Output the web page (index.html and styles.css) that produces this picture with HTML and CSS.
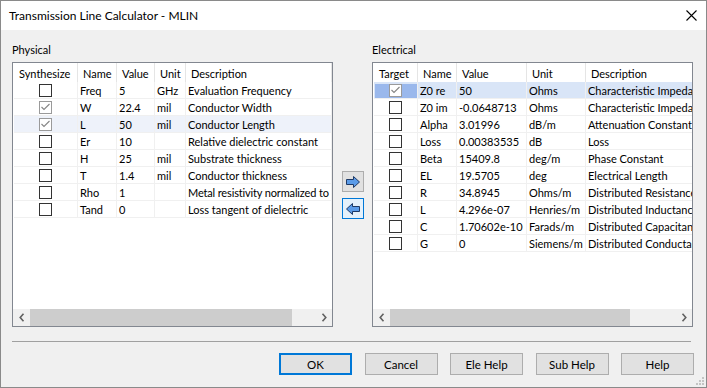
FILE: index.html
```html
<!DOCTYPE html>
<html lang="en">
<head>
    <meta charset="UTF-8">
    <meta name="viewport" content="width=device-width, initial-scale=1.0">
    <title>Transmission Line Calculator - MLIN</title>
    <link rel="stylesheet" href="styles.css">
</head>
<body>
    <div class="window">
        <div class="titlebar">
            <span class="title">Transmission Line Calculator - MLIN</span>
            <svg class="close" width="11" height="11" viewBox="0 0 11 11">
                <path d="M0.5 0.5 L10.5 10.5 M10.5 0.5 L0.5 10.5" stroke="#000" stroke-width="1.1" fill="none"/>
            </svg>
        </div>

        <div class="content">
            <div class="panels">
                <div class="panel-label">Physical</div>
                <div></div>
                <div class="panel-label">Electrical</div>

                <!-- physical parameters -->
                <div class="list physical">
                    <div class="rows">
                        <div class="row head">
                            <div class="cell">Synthesize</div>
                            <div class="cell">Name</div>
                            <div class="cell">Value</div>
                            <div class="cell">Unit</div>
                            <div class="cell">Description</div>
                        </div>
                        <div class="row">
                            <div class="cell check"><span class="box"></span></div>
                            <div class="cell">Freq</div>
                            <div class="cell">5</div>
                            <div class="cell">GHz</div>
                            <div class="cell">Evaluation Frequency</div>
                        </div>
                        <div class="row">
                            <div class="cell check"><span class="box checked"><svg width="11" height="11" viewBox="0 0 11 11"><path d="M1.5 5 L4 7.5 L9.5 2" stroke="#858585" stroke-width="1.1" fill="none"/></svg></span></div>
                            <div class="cell">W</div>
                            <div class="cell">22.4</div>
                            <div class="cell">mil</div>
                            <div class="cell">Conductor Width</div>
                        </div>
                        <div class="row sel">
                            <div class="cell check"><span class="box checked"><svg width="11" height="11" viewBox="0 0 11 11"><path d="M1.5 5 L4 7.5 L9.5 2" stroke="#858585" stroke-width="1.1" fill="none"/></svg></span></div>
                            <div class="cell">L</div>
                            <div class="cell">50</div>
                            <div class="cell">mil</div>
                            <div class="cell">Conductor Length</div>
                        </div>
                        <div class="row">
                            <div class="cell check"><span class="box"></span></div>
                            <div class="cell">Er</div>
                            <div class="cell">10</div>
                            <div class="cell"></div>
                            <div class="cell">Relative dielectric constant</div>
                        </div>
                        <div class="row">
                            <div class="cell check"><span class="box"></span></div>
                            <div class="cell">H</div>
                            <div class="cell">25</div>
                            <div class="cell">mil</div>
                            <div class="cell">Substrate thickness</div>
                        </div>
                        <div class="row">
                            <div class="cell check"><span class="box"></span></div>
                            <div class="cell">T</div>
                            <div class="cell">1.4</div>
                            <div class="cell">mil</div>
                            <div class="cell">Conductor thickness</div>
                        </div>
                        <div class="row">
                            <div class="cell check"><span class="box"></span></div>
                            <div class="cell">Rho</div>
                            <div class="cell">1</div>
                            <div class="cell"></div>
                            <div class="cell tight">Metal resistivity normalized to</div>
                        </div>
                        <div class="row">
                            <div class="cell check"><span class="box"></span></div>
                            <div class="cell">Tand</div>
                            <div class="cell">0</div>
                            <div class="cell"></div>
                            <div class="cell">Loss tangent of dielectric</div>
                        </div>
                    </div>
                    <div class="hscroll">
                        <div class="arrow"><svg width="6" height="9" viewBox="0 0 6 9"><path d="M4.5 0.8 L1.2 4.5 L4.5 8.2" stroke="#606060" stroke-width="1.6" fill="none"/></svg></div>
                        <div class="track"><div class="thumb thumb-physical"></div></div>
                        <div class="arrow"><svg width="6" height="9" viewBox="0 0 6 9"><path d="M1.5 0.8 L4.8 4.5 L1.5 8.2" stroke="#606060" stroke-width="1.6" fill="none"/></svg></div>
                    </div>
                </div>

                <!-- move buttons -->
                <div class="transfer">
                    <button class="move">
                        <svg width="16" height="12" viewBox="0 0 16 12"><path d="M1.5 3.5 H8.5 V0.5 L14.5 6 L8.5 11.5 V8.5 H1.5 Z" fill="#5b9be8" stroke="#1f3a66" stroke-width="1"/></svg>
                    </button>
                    <button class="move focus">
                        <svg width="16" height="12" viewBox="0 0 16 12"><path d="M14.5 3.5 H7.5 V0.5 L1.5 6 L7.5 11.5 V8.5 H14.5 Z" fill="#5b9be8" stroke="#1f3a66" stroke-width="1"/></svg>
                    </button>
                </div>

                <!-- electrical results -->
                <div class="list electrical">
                    <div class="rows">
                        <div class="row head">
                            <div class="cell">Target</div>
                            <div class="cell">Name</div>
                            <div class="cell">Value</div>
                            <div class="cell">Unit</div>
                            <div class="cell">Description</div>
                        </div>
                        <div class="row sel-active">
                            <div class="cell check hot"><span class="box checked"><svg width="11" height="11" viewBox="0 0 11 11"><path d="M1.5 5 L4 7.5 L9.5 2" stroke="#858585" stroke-width="1.1" fill="none"/></svg></span></div>
                            <div class="cell">Z0 re</div>
                            <div class="cell">50</div>
                            <div class="cell">Ohms</div>
                            <div class="cell">Characteristic Impedance</div>
                        </div>
                        <div class="row">
                            <div class="cell check"><span class="box"></span></div>
                            <div class="cell">Z0 im</div>
                            <div class="cell">-0.0648713</div>
                            <div class="cell">Ohms</div>
                            <div class="cell">Characteristic Impedance</div>
                        </div>
                        <div class="row">
                            <div class="cell check"><span class="box"></span></div>
                            <div class="cell">Alpha</div>
                            <div class="cell">3.01996</div>
                            <div class="cell">dB/m</div>
                            <div class="cell">Attenuation Constant</div>
                        </div>
                        <div class="row">
                            <div class="cell check"><span class="box"></span></div>
                            <div class="cell">Loss</div>
                            <div class="cell">0.00383535</div>
                            <div class="cell">dB</div>
                            <div class="cell">Loss</div>
                        </div>
                        <div class="row">
                            <div class="cell check"><span class="box"></span></div>
                            <div class="cell">Beta</div>
                            <div class="cell">15409.8</div>
                            <div class="cell">deg/m</div>
                            <div class="cell">Phase Constant</div>
                        </div>
                        <div class="row">
                            <div class="cell check"><span class="box"></span></div>
                            <div class="cell">EL</div>
                            <div class="cell">19.5705</div>
                            <div class="cell">deg</div>
                            <div class="cell">Electrical Length</div>
                        </div>
                        <div class="row">
                            <div class="cell check"><span class="box"></span></div>
                            <div class="cell">R</div>
                            <div class="cell">34.8945</div>
                            <div class="cell">Ohms/m</div>
                            <div class="cell">Distributed Resistance</div>
                        </div>
                        <div class="row">
                            <div class="cell check"><span class="box"></span></div>
                            <div class="cell">L</div>
                            <div class="cell">4.296e-07</div>
                            <div class="cell">Henries/m</div>
                            <div class="cell">Distributed Inductance</div>
                        </div>
                        <div class="row">
                            <div class="cell check"><span class="box"></span></div>
                            <div class="cell">C</div>
                            <div class="cell">1.70602e-10</div>
                            <div class="cell">Farads/m</div>
                            <div class="cell">Distributed Capacitance</div>
                        </div>
                        <div class="row">
                            <div class="cell check"><span class="box"></span></div>
                            <div class="cell">G</div>
                            <div class="cell">0</div>
                            <div class="cell">Siemens/m</div>
                            <div class="cell">Distributed Conductance</div>
                        </div>
                    </div>
                    <div class="hscroll">
                        <div class="arrow"><svg width="6" height="9" viewBox="0 0 6 9"><path d="M4.5 0.8 L1.2 4.5 L4.5 8.2" stroke="#606060" stroke-width="1.6" fill="none"/></svg></div>
                        <div class="track"><div class="thumb thumb-electrical"></div></div>
                        <div class="arrow"><svg width="6" height="9" viewBox="0 0 6 9"><path d="M1.5 0.8 L4.8 4.5 L1.5 8.2" stroke="#606060" stroke-width="1.6" fill="none"/></svg></div>
                    </div>
                </div>
            </div>

            <div class="separator"></div>

            <div class="actions">
                <button class="btn default">OK</button>
                <button class="btn">Cancel</button>
                <button class="btn">Ele Help</button>
                <button class="btn">Sub Help</button>
                <button class="btn">Help</button>
            </div>
        </div>

        <svg class="grip" width="8" height="8" viewBox="0 0 8 8">
            <rect x="6" y="0" width="2" height="2" fill="#c4c4c4"/>
            <rect x="3" y="3" width="2" height="2" fill="#c4c4c4"/>
            <rect x="6" y="3" width="2" height="2" fill="#c4c4c4"/>
            <rect x="0" y="6" width="2" height="2" fill="#c4c4c4"/>
            <rect x="3" y="6" width="2" height="2" fill="#c4c4c4"/>
            <rect x="6" y="6" width="2" height="2" fill="#c4c4c4"/>
        </svg>
    </div>
</body>
</html>
```

FILE: styles.css
```css
body {
    margin: 0;
    font-family: Lato, "Liberation Sans", sans-serif;
    font-size: 11px;
    color: #000;
    background-color: #f0f0f0;
}

.window {
    position: relative;
    width: 707px;
    height: 388px;
    box-sizing: border-box;
    border: 1px solid #8a8a8a;
    background-color: #f0f0f0;
    display: flex;
    flex-direction: column;
}

.titlebar {
    height: 29px;
    background-color: #fff;
    display: flex;
    align-items: center;
    justify-content: space-between;
    padding: 0 9px 0 8px;
    font-size: 12px;
}

.close {
    display: block;
}

.content {
    flex: 1;
    padding: 11px 13px 0 11px;
}

.panels {
    display: grid;
    grid-template-columns: 321px 39px 321px;
    grid-template-rows: 16px 265px;
    row-gap: 5px;
}

.panel-label {
    line-height: 17px;
}

.list {
    background-color: #fff;
    border: 1px solid #828790;
    display: flex;
    flex-direction: column;
    overflow: hidden;
}

.rows {
    flex: 1;
    padding-left: 1px;
    overflow: hidden;
}

.row {
    display: grid;
    height: 17px;
    box-sizing: border-box;
    border-bottom: 1px solid #f0f0f0;
    line-height: 17px;
}

.physical .row {
    grid-template-columns: 64px 39px 38px 31px 146px;
}

.electrical .row {
    grid-template-columns: 44px 39px 70px 59px 150px;
}

.cell {
    box-sizing: border-box;
    padding-left: 2px;
    border-right: 1px solid #f0f0f0;
    white-space: nowrap;
    overflow: hidden;
}

.cell.tight {
    letter-spacing: -0.15px;
}

.row.head {
    height: 19px;
    border-bottom: none;
}

.row.head .cell {
    padding-left: 5px;
    padding-top: 2px;
    border-right-color: #e5e5e5;
}

.row.sel {
    background-color: #eef2fa;
}

.row.sel-active {
    background-color: #d9e5f7;
}

.cell.check {
    display: flex;
    align-items: center;
    justify-content: center;
    padding: 0;
}

.cell.hot {
    background-color: #9ab8ec;
    box-shadow: inset 1px 2px 0 #d9e5f7;
}

.box {
    width: 13px;
    height: 13px;
    box-sizing: border-box;
    border: 1px solid #333;
    background-color: #fff;
    display: flex;
    align-items: center;
    justify-content: center;
}

.box.checked {
    border-color: #9a9a9a;
}

.box svg {
    display: block;
}

.hscroll {
    display: flex;
    height: 17px;
    background-color: #f0f0f0;
}

.hscroll .arrow {
    width: 17px;
    display: flex;
    align-items: center;
    justify-content: center;
}

.hscroll .track {
    flex: 1;
}

.hscroll .thumb {
    height: 100%;
    background-color: #cdcdcd;
}

.thumb-physical {
    width: 262px;
}

.thumb-electrical {
    width: 240px;
}

.transfer {
    display: flex;
    flex-direction: column;
    align-items: center;
    justify-content: center;
    gap: 6px;
    padding-top: 1px;
}

.move {
    width: 22px;
    height: 21px;
    padding: 0;
    border: 1px solid #adadad;
    background-color: #e1e1e1;
    display: flex;
    align-items: center;
    justify-content: center;
}

.move.focus {
    border-color: #0078d7;
    background-color: #e5f1fb;
}

.separator {
    margin-top: 14px;
    margin-right: 2px;
    border-top: 1px solid #a0a0a0;
}

.actions {
    display: flex;
    justify-content: flex-end;
    gap: 12.5px;
    margin-top: 11px;
    margin-right: -1px;
}

.btn {
    width: 73px;
    height: 22px;
    box-sizing: border-box;
    padding: 0;
    border: 1px solid #adadad;
    background-color: #e1e1e1;
    font: inherit;
    font-size: 11.5px;
    color: #000;
}

.btn.default {
    border: 2px solid #0078d7;
}

.grip {
    position: absolute;
    right: 2px;
    bottom: 2px;
}
```
